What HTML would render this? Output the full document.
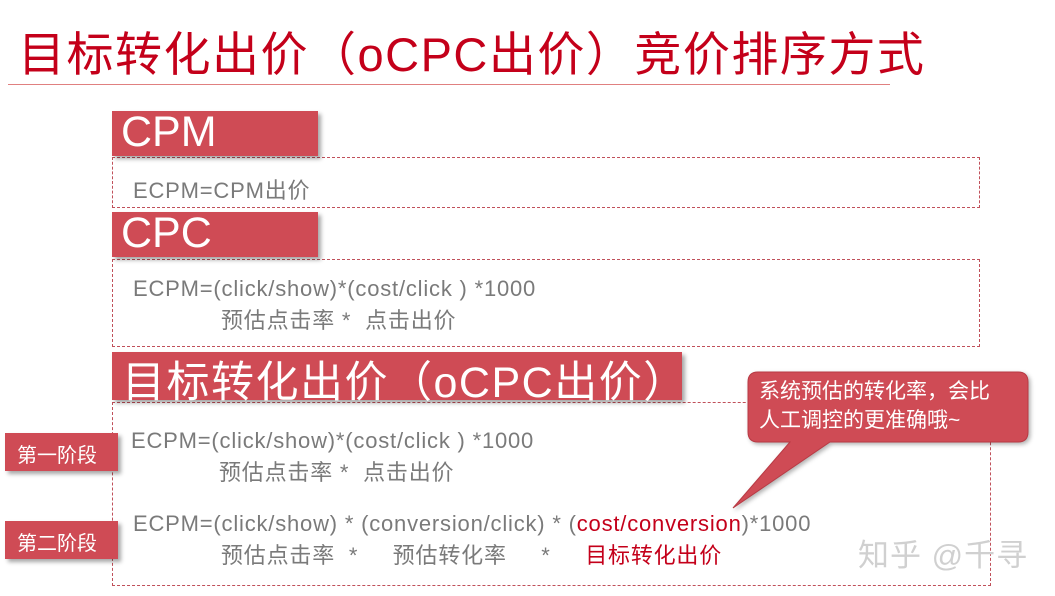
<!DOCTYPE html>
<html><head><meta charset="utf-8"><style>
body{margin:0;width:1055px;height:596px;background:#fff;position:relative;overflow:hidden;font-family:"Liberation Sans","Noto Sans CJK SC",sans-serif}
.a{position:absolute;white-space:nowrap}
.lab{position:absolute;background:#cf4b55;color:#fff;box-shadow:3px 3px 4px rgba(0,0,0,.35)}
.box{position:absolute;border:1.5px dashed #c0505a}
.g{color:#7a7a7a;font-size:22px;letter-spacing:0.8px}
</style></head><body>
<div class="a" style="left:18px;top:16px;font-size:47px;color:#c4001a;letter-spacing:1.5px">目标转化出价（oCPC出价）竞价排序方式</div>
<div class="a" style="left:8px;top:84px;width:882px;height:1px;background:#e08080"></div>

<div class="box" style="left:112px;top:157px;width:866px;height:49px"></div>
<div class="lab" style="left:112px;top:111px;width:206px;height:45px"><span class="a" style="left:9px;top:-3px;font-size:43px">CPM</span></div>
<div class="a g" style="left:133px;top:173px">ECPM=CPM出价</div>

<div class="box" style="left:112px;top:259px;width:866px;height:86px"></div>
<div class="lab" style="left:112px;top:212px;width:206px;height:45px"><span class="a" style="left:9px;top:-3px;font-size:43px">CPC</span></div>
<div class="a g" style="left:133px;top:276px">ECPM=(click/show)*(cost/click ) *1000</div>
<div class="a g" style="left:221px;top:303px">预估点击率 *&nbsp; 点击出价</div>

<div class="box" style="left:112px;top:402px;width:877px;height:182px"></div>
<div class="lab" style="left:112px;top:352px;width:570px;height:48px"><span class="a" style="left:10px;top:-4px;font-size:43px;letter-spacing:1.5px">目标转化出价（oCPC出价）</span></div>

<div class="lab" style="left:5px;top:433px;width:113px;height:38px"><span class="a" style="left:12px;top:6px;font-size:20px">第一阶段</span></div>
<div class="a g" style="left:131px;top:428px">ECPM=(click/show)*(cost/click ) *1000</div>
<div class="a g" style="left:219px;top:455px">预估点击率 *&nbsp; 点击出价</div>

<div class="lab" style="left:5px;top:521px;width:113px;height:38px"><span class="a" style="left:12px;top:6px;font-size:20px">第二阶段</span></div>
<div class="a g" style="left:133px;top:511px">ECPM=(click/show) * (conversion/click) * (<span style="color:#c4001a">cost/conversion</span>)*1000</div>
<div class="a g" style="left:221px;top:538px">预估点击率&nbsp; *&nbsp;&nbsp;&nbsp;&nbsp; 预估转化率&nbsp;&nbsp;&nbsp;&nbsp; *&nbsp;&nbsp;&nbsp;&nbsp; <span style="color:#c4001a">目标转化出价</span></div>

<svg class="a" style="left:0;top:0" width="1055" height="596"><path d="M762 372 H1018 Q1028 372 1028 382 V432 Q1028 442 1018 442 H830 L733 508 L790 442 H758 Q748 442 748 432 V382 Q748 372 758 372Z" fill="#cf4b55" stroke="#b83a44" stroke-width="1" style="filter:drop-shadow(2px 2px 2px rgba(0,0,0,.3))"/></svg>
<div class="a" style="left:759px;top:377px;color:#fff;font-size:21px;line-height:29px">系统预估的转化率，会比<br>人工调控的更准确哦~</div>

<div class="a" style="left:858px;top:530px;color:#d0d0d0;font-size:31px;letter-spacing:1px">知乎 @千寻</div>
</body></html>
